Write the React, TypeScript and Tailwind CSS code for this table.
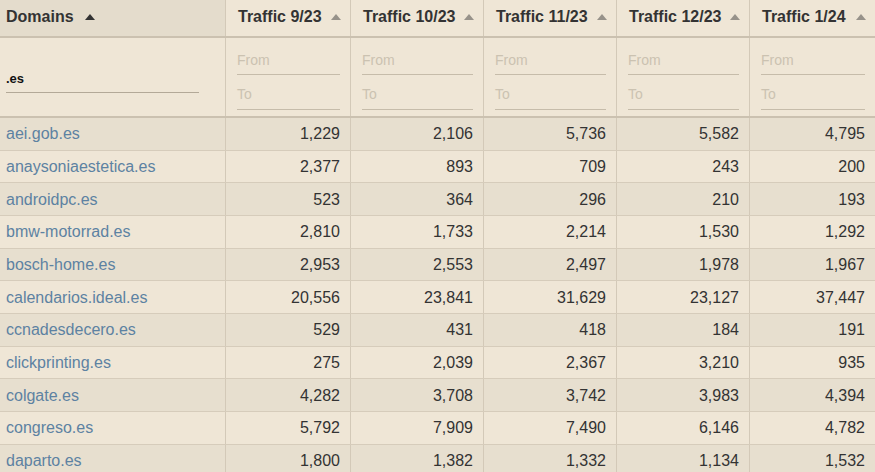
import React from 'react';

const COLS = ['Traffic 9/23', 'Traffic 10/23', 'Traffic 11/23', 'Traffic 12/23', 'Traffic 1/24'];

const ROWS: [string, string[]][] = [
  ['aei.gob.es', ['1,229', '2,106', '5,736', '5,582', '4,795']],
  ['anaysoniaestetica.es', ['2,377', '893', '709', '243', '200']],
  ['androidpc.es', ['523', '364', '296', '210', '193']],
  ['bmw-motorrad.es', ['2,810', '1,733', '2,214', '1,530', '1,292']],
  ['bosch-home.es', ['2,953', '2,553', '2,497', '1,978', '1,967']],
  ['calendarios.ideal.es', ['20,556', '23,841', '31,629', '23,127', '37,447']],
  ['ccnadesdecero.es', ['529', '431', '418', '184', '191']],
  ['clickprinting.es', ['275', '2,039', '2,367', '3,210', '935']],
  ['colgate.es', ['4,282', '3,708', '3,742', '3,983', '4,394']],
  ['congreso.es', ['5,792', '7,909', '7,490', '6,146', '4,782']],
  ['daparto.es', ['1,800', '1,382', '1,332', '1,134', '1,532']],
];

const grid = 'grid grid-cols-[226px_125px_133px_133px_133px_125px]';

function SortArrow({ active }: { active?: boolean }) {
  return (
    <svg width="10" height="6" viewBox="0 0 10 6" className="shrink-0">
      <path d="M0 6 L5 0 L10 6 Z" fill={active ? '#333333' : '#97928a'} />
    </svg>
  );
}

export default function App() {
  return (
    <div className="w-[875px] h-[472px] overflow-hidden bg-[#efe6d6] text-[#333] font-['Liberation_Sans',Arial,sans-serif]">
      {/* Header */}
      <div className={`${grid} h-[38px] border-b-2 border-[#cbc1b0] bg-[#efe6d6]`}>
        <div className="flex items-center gap-[11px] px-[6px] pb-[2px] bg-[#e4dccc] border-r border-[#d3c9b8] text-[16px] font-bold">
          Domains <SortArrow active />
        </div>
        {COLS.map((c, i) => (
          <div
            key={c}
            className={`flex items-center justify-between pl-[12px] pr-[9px] pb-[2px] text-[16px] font-bold ${i < 4 ? 'border-r border-[#d3c9b8]' : ''}`}
          >
            <span>{c}</span>
            <SortArrow />
          </div>
        ))}
      </div>

      {/* Filters */}
      <div className={`${grid} h-[80px] border-b-2 border-[#cbc1b0]`}>
        <div className="border-r border-[#d3c9b8] px-[6px] flex flex-col justify-center pt-[10px]">
          <div className="w-[193px] border-b border-[#b3a998] h-[22px] flex items-end pb-[4px] text-[13px] font-bold text-[#111]">
            .es
          </div>
        </div>
        {COLS.map((c, i) => (
          <div key={c} className={`pl-[11px] pr-[10px] pt-[12px] ${i < 4 ? 'border-r border-[#d3c9b8]' : ''}`}>
            <div className="h-[25px] border-b border-[#c6bcaa] text-[14px] text-[#cbc2b1] flex items-center pb-[4px]">
              From
            </div>
            <div className="h-[35px] border-b border-[#c6bcaa] text-[14px] text-[#cbc2b1] flex items-end pb-[4px]">
              To
            </div>
          </div>
        ))}
      </div>

      {/* Rows */}
      {ROWS.map(([domain, vals], r) => (
        <div
          key={domain}
          className={`${grid} h-[32.67px] border-b border-[#d6ccbb] text-[16px] ${r % 2 === 0 ? 'bg-[#e7dfcf]' : 'bg-[#efe6d6]'}`}
        >
          <div className="flex items-center px-[6px] pt-[1px] border-r border-[#d3c9b8] text-[#5d82a2]">{domain}</div>
          {vals.map((v, i) => (
            <div key={i} className={`flex items-center justify-end pr-[10px] pt-[1px] ${i < 4 ? 'border-r border-[#d3c9b8]' : ''}`}>
              {v}
            </div>
          ))}
        </div>
      ))}
    </div>
  );
}
